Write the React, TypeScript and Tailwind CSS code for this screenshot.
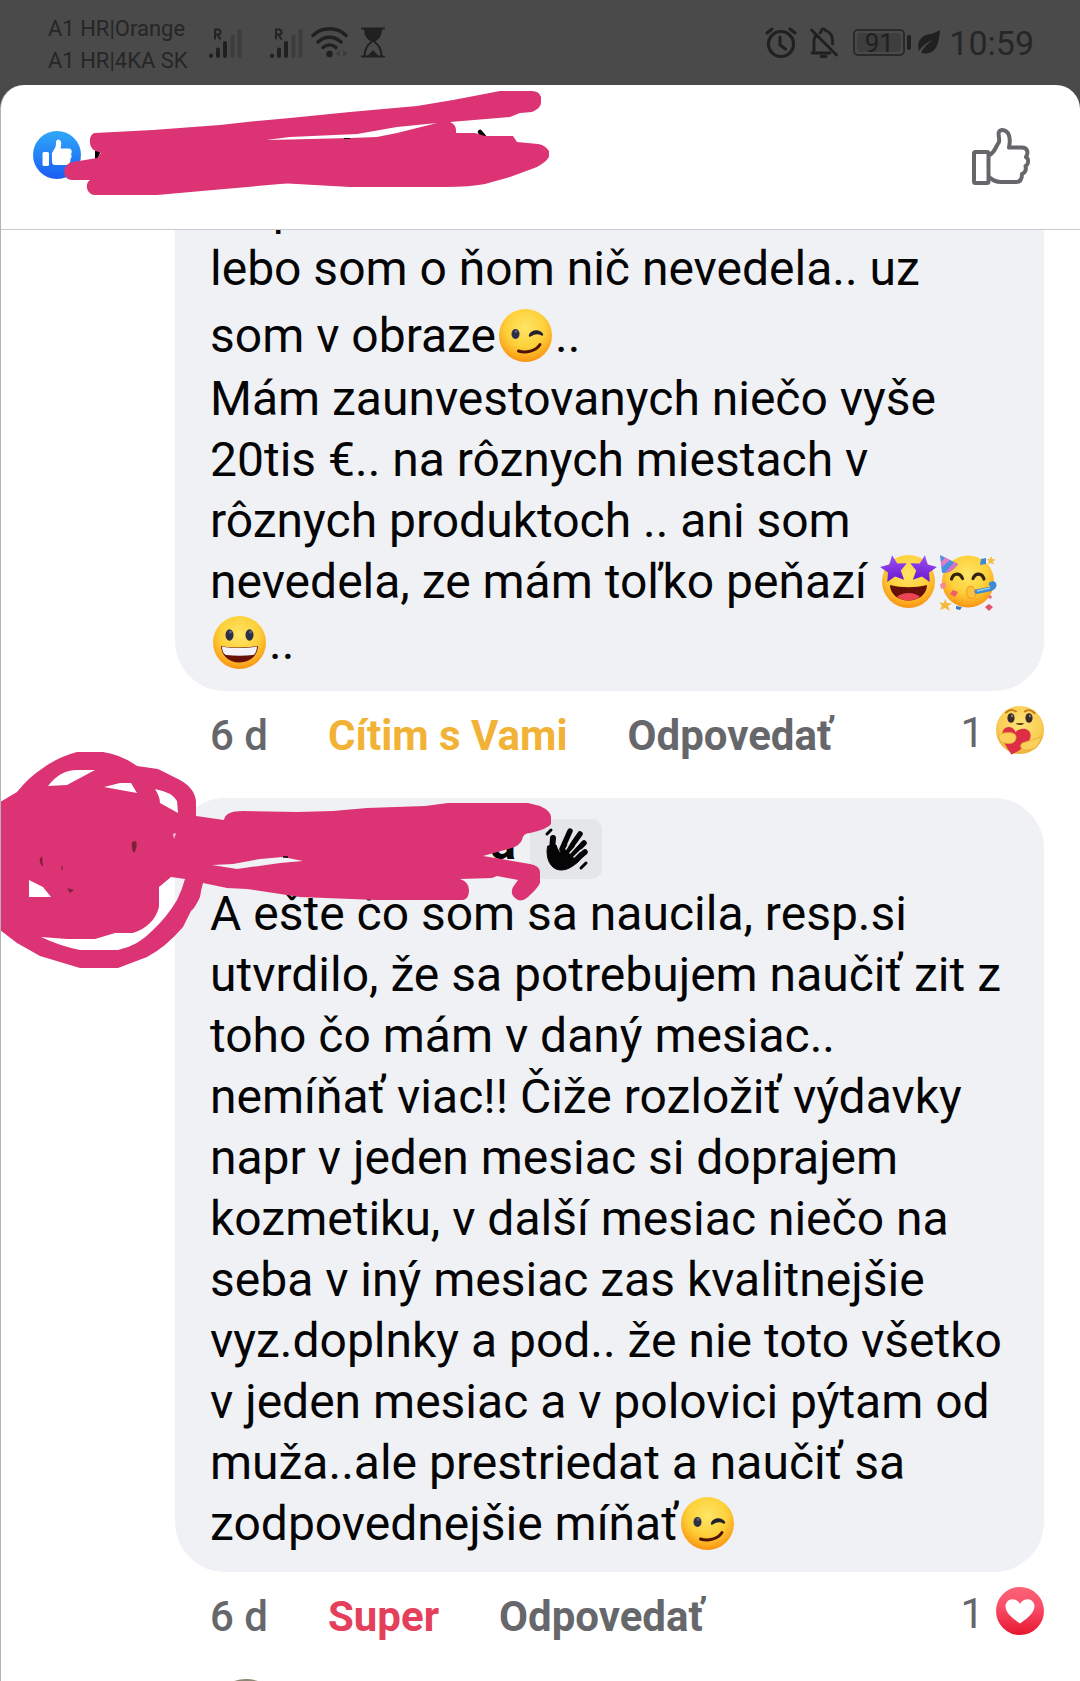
import React from "react";

const FONT = "font-[Roboto,'Noto_Sans',sans-serif]";

function SharedGradients() {
  return (
    <svg className="absolute h-0 w-0" aria-hidden="true">
      <defs>
        <radialGradient id="face" cx="0.5" cy="0.35" r="0.68">
          <stop offset="0" stopColor="#ffe566" />
          <stop offset="0.55" stopColor="#fdd03a" />
          <stop offset="0.85" stopColor="#fba51c" />
          <stop offset="1" stopColor="#f6890f" />
        </radialGradient>
        <radialGradient id="softFace" cx="0.5" cy="0.4" r="0.6">
          <stop offset="0" stopColor="#fde377" />
          <stop offset="0.7" stopColor="#fbcf55" />
          <stop offset="1" stopColor="#eeb03c" />
        </radialGradient>
        <linearGradient id="like" x1="0" y1="0" x2="0" y2="1">
          <stop offset="0" stopColor="#2fa8fb" />
          <stop offset="1" stopColor="#1a5df2" />
        </linearGradient>
        <linearGradient id="love" x1="0" y1="0" x2="0" y2="1">
          <stop offset="0" stopColor="#fc6275" />
          <stop offset="0.4" stopColor="#f9506a" />
          <stop offset="1" stopColor="#e8152f" />
        </linearGradient>
        <linearGradient id="star" x1="0" y1="0" x2="0" y2="1">
          <stop offset="0" stopColor="#9b50f5" />
          <stop offset="1" stopColor="#6a1ad0" />
        </linearGradient>
      </defs>
    </svg>
  );
}

function Emoji({ label, children }: { label: string; children: React.ReactNode }) {
  return (
    <svg
      role="img"
      aria-label={label}
      viewBox="0 0 53 53"
      className="mx-[3px] inline-block h-[53px] w-[53px] overflow-visible align-[-10px]"
    >
      {children}
    </svg>
  );
}

function Wink() {
  return (
    <Emoji label="žmurkajúca tvár">
      <circle cx="26.5" cy="26.5" r="26.5" fill="url(#face)" />
      <ellipse cx="16.5" cy="25" rx="4" ry="5" fill="#2b2f49" />
      <circle cx="17" cy="22.5" r="1.4" fill="#5c6285" />
      <path d="M31 26.500C33 21.500 40 21 43 25.500C39.500 23.500 35 24 31 26.500Z" fill="#22202e" stroke="#22202e" strokeWidth="2.400" strokeLinejoin="round" />
      <path d="M19.500 42C27 44.500 37 42 41 35.500" fill="none" stroke="#4f1206" strokeWidth="3" strokeLinecap="round" />
    </Emoji>
  );
}

function Grin() {
  return (
    <Emoji label="usmiata tvár">
      <circle cx="26.5" cy="26.5" r="26.5" fill="url(#face)" />
      <ellipse cx="16.500" cy="19" rx="4" ry="5.800" fill="#2b2f49" />
      <ellipse cx="36.500" cy="19" rx="4" ry="5.800" fill="#2b2f49" />
      <circle cx="17.500" cy="16" r="1.500" fill="#5c6285" />
      <circle cx="37.500" cy="16" r="1.500" fill="#5c6285" />
      <path d="M8 30C20 32 33 32 45 30C45 39 37 46.500 26.500 46.500C16 46.500 8 39 8 30Z" fill="#671109" />
      <path d="M9 30.600C20 32.600 33 32.600 44 30.600C44 35 42 38.500 40 39C31 40 22 40 13 39C11 38.500 9 35 9 30.600Z" fill="#f4f2fa" />
    </Emoji>
  );
}

function StarEyes() {
  const star = "M0 -14L4 -5L13.500 -4L6.500 2.500L8.500 12L0 7.500L-8.500 12L-6.500 2.500L-13.500 -4L-4 -5Z";
  return (
    <Emoji label="tvár s hviezdami v očiach">
      <circle cx="26.5" cy="26.5" r="26.5" fill="url(#face)" />
      <path d="M8 30C20 33 33 33 45 30C45 39 37 45.500 26.500 45.500C16 45.500 8 39 8 30Z" fill="#651008" />
      <path d="M15 42C20 36.500 33 36.500 38 42C31 46.500 22 46.500 15 42Z" fill="#ec4453" />
      <path d={star} transform="translate(12 14) rotate(-8)" fill="url(#star)" />
      <path d={star} transform="translate(41 14) rotate(8)" fill="url(#star)" />
    </Emoji>
  );
}

function Party() {
  return (
    <Emoji label="oslavujúca tvár">
      <circle cx="27" cy="26.500" r="26" fill="url(#face)" />
      <path d="M-1 0L17 9C14 14 8 18 1 18Z" fill="#4b8fe0" />
      <path d="M4 2.500L9 5L1 12L0 7Z" fill="#e77bc3" />
      <path d="M13 7L17 9C14 14 8 18 4 18Z" fill="#d873bd" />
      <path d="M10.500 24C12.500 17.500 19 17.500 21.500 23.500M32 23.500C34.500 17.500 41 17.500 43 24" fill="none" stroke="#33230f" strokeWidth="3.200" strokeLinecap="round" />
      <path d="M34 37L49 34C55 32 54 27 50 29" fill="none" stroke="#3c8bd4" strokeWidth="4.500" strokeLinecap="round" />
      <path d="M36 36L49 33" stroke="#8fd0f2" strokeWidth="1.500" />
      <path d="M27 32C31 30 35 33 33 37C37 40 32 45 28 43C25 41 25 35 27 32Z" fill="#fbc23a" stroke="#ee9b24" strokeWidth="1" />
      <path d="M40 4L45 3L45 9L39 10Z" fill="#3f8ad8" />
      <path d="M50 1L51.500 4L54.500 4.500L52 6.500L53 9.500L50 8L47 9.500L48 6.500L46 4L49 4Z" fill="#f3bf3f" />
      <path d="M-1 29L4 27L5 32L0 34Z" fill="#f08a9c" />
      <path d="M12 35L17 37L14 42L9 39Z" fill="#ef5d6b" />
      <path d="M4 44L6 48L11 48.500L7 51L9 56L4 53L-1 55L1 50.500L-2 47.500L3 48Z" fill="#f2b93a" />
      <path d="M15 51L21 52L19 55L15 54Z" fill="#3f78c0" />
      <path d="M48 49L52 52L48 56L44 52Z" fill="#e3526a" />
      <path d="M48 40L51 41L50 44L47 43Z" fill="#ee6c80" />
    </Emoji>
  );
}

function CareReaction() {
  return (
    <svg viewBox="0 0 48 48" className="h-12 w-12 overflow-visible" role="img" aria-label="Cítim s Vami">
      <circle cx="24" cy="24" r="24" fill="url(#softFace)" />
      <path d="M10 6.500C13 3.500 17 3.500 20 5.500M29 5.500C32 3.500 36 4 38.500 7" fill="none" stroke="#c77a1b" strokeWidth="2" strokeLinecap="round" />
      <ellipse cx="15" cy="12" rx="3.600" ry="4.800" fill="#3a2a2a" />
      <ellipse cx="33" cy="12" rx="3.600" ry="4.800" fill="#3a2a2a" />
      <circle cx="16" cy="10" r="1.200" fill="#8a7a78" />
      <circle cx="34" cy="10" r="1.200" fill="#8a7a78" />
      <path d="M19.500 17.500Q24 16.500 28.500 17.500Q24 20.500 19.500 17.500Z" fill="#5a2d12" />
      <path d="M15.500 48.500C11 42 5 33 6.500 26C8 19.500 17 19 19.500 26C24 21 33 21.500 34.500 28C36 37 24 45 15.500 48.500Z" fill="#dc2f45" />
      <path d="M3 29C8 26 15 26 18.500 28C21.500 30 20 36 16 37C11 38.500 6 36.500 3 34Z" fill="#fbd05a" stroke="#e9a93a" strokeWidth="0.800" />
      <path d="M46 31C41 32 33 35 26.500 37C23 39 25 44 29 44C34 44.500 38 43 41 41Z" fill="#fbd05a" stroke="#e9a93a" strokeWidth="0.800" />
    </svg>
  );
}

function LoveReaction() {
  return (
    <svg viewBox="0 0 48 48" className="h-12 w-12" role="img" aria-label="Super">
      <circle cx="24" cy="24" r="24" fill="url(#love)" />
      <path d="M24 36.500C19 33 9.500 26.500 9.500 19.500C9.500 11.500 20 9.500 24 17C28 9.500 38.500 11.500 38.500 19.500C38.500 26.500 29 33 24 36.500Z" fill="#fff" />
    </svg>
  );
}

function Signal() {
  return (
    <svg viewBox="0 0 33 32" className="h-8 w-[33px]" aria-hidden="true">
      <path d="M6 12.500V2.500H9Q11.500 2.500 11.500 5T9 7.500H6M8.500 7.500L11.500 12.500" fill="none" stroke="#232323" strokeWidth="2" />
      <g strokeWidth="4" strokeLinecap="round">
        <path d="M2 29V28.500M9 29V22.500M16 29V16" stroke="#202020" />
        <path d="M23.500 29V9.500M30.500 29V4" stroke="#3c3c3c" />
      </g>
    </svg>
  );
}

function StatusBar() {
  return (
    <header className="flex h-[85px] shrink-0 items-center justify-between pr-[46px] pl-12 text-[#262626]">
      <div className="flex items-center">
        <div className="w-[161px] pt-1 text-[22px] leading-8 whitespace-nowrap">
          <div>A1 HR|Orange</div>
          <div>A1 HR|4KA SK</div>
        </div>
        <div className="flex items-center">
          <Signal />
          <span className="w-7" />
          <Signal />
          <svg viewBox="0 0 38 31" className="ml-2 h-[31px] w-[38px]" fill="none" aria-hidden="true">
            <g stroke="#202020" strokeWidth="3.500" strokeLinecap="round">
              <path d="M2 8.500C11 -0.500 26 -0.500 35 8.500" />
              <path d="M7 15C14 8.500 23 8.500 30 15" />
              <path d="M12 20.500C16 17 21 17 25 20.500" />
            </g>
            <circle cx="18.500" cy="27" r="3.200" fill="#202020" />
            <path d="M29 23V30L25 26.500ZM32 23V30L37 26.500Z" fill="#3c3c3c" />
          </svg>
          <svg viewBox="0 0 24 31" className="ml-3 h-[31px] w-6" fill="none" aria-hidden="true">
            <path d="M1 1.500H23M1 29.500H23" stroke="#202020" strokeWidth="2" strokeLinecap="round" />
            <path d="M3 2H21C21 9 18 12 13.500 15H10.500C6 12 3 9 3 2Z" fill="#202020" />
            <path d="M11 14.500C6.500 18 4 21 3.500 29M13 14.500C17.500 18 20 21 20.500 29" stroke="#202020" strokeWidth="2" />
            <path d="M6.500 29L12 23L17.500 29Z" fill="#202020" />
          </svg>
        </div>
      </div>
      <div className="flex items-center">
        <svg viewBox="0 0 32 32" className="h-8 w-8" fill="none" stroke="#202020" aria-hidden="true">
          <circle cx="16" cy="17" r="12.500" strokeWidth="3.200" />
          <path d="M15 10V18L20.500 22M2 6L7 2M25 2L30 6" strokeWidth="3" strokeLinecap="round" />
        </svg>
        <svg viewBox="0 0 30 32" className="ml-3 h-8 w-[30px]" fill="none" stroke="#202020" strokeWidth="2.800" strokeLinecap="round" aria-hidden="true">
          <path d="M2.500 3L27.500 28M3 26H21M5 25V14C5 12 5.500 10.500 6.500 9M11 6C12 5 12.500 5 12.500 3C13 1.500 16 1.500 16.500 3.500C21 5 23.500 9 23.500 14V17" />
          <path d="M12 29.500H17" />
        </svg>
        <div className="ml-3.5 flex items-center">
          <div className="flex h-[27px] w-[52px] rounded-[5px] border-2 border-[#2a2a2a] p-0.5">
            <div className="flex flex-1 items-center justify-center rounded-sm bg-[#3e3e3e] text-[26px] leading-5 text-[#202020]">91</div>
          </div>
          <span className="ml-0.5 h-[15px] w-1 rounded-sm bg-[#202020]" />
        </div>
        <svg viewBox="0 0 24 26" className="mb-0.5 ml-1.5 h-[26px] w-6" aria-hidden="true">
          <path d="M23 1C22 11 21 23 10 24.500C7 25 5 24 4 23.500C7 18 11 14 16 11C10 13 5 17 2 22C-1 12 5 7 11 5.500C16 4.500 19 3.500 23 1Z" fill="#202020" />
        </svg>
        <time className="ml-2 text-[34px] leading-10">10:59</time>
      </div>
    </header>
  );
}

function HeaderScribble() {
  return (
    <svg viewBox="60 85 500 115" className="pointer-events-none absolute top-0 left-[59px] h-[115px] w-[500px]" aria-hidden="true">
      <path d="M95 151H101L97 160H95Z" fill="#000" />
      <path d="M480 132L485 138" stroke="#000" strokeWidth="4.500" strokeLinecap="round" />
      <path
        fill="#db3374"
        d="M95 133C88 134 88 149 96 151L101 153L97 158L73 162C61 164 62 180 72 180H90C84 184 87 195 95 195H157L213 190L280 184Q287 183 297 184L350 187H445Q470 187 485 184L510 177L537 167Q549 160 549 156V151Q545 145 538 144L517 142L513 136H485L475 133H456Q457 125 450 122L510 117L520 113L532 112Q541 108 541 103V97Q539 91 532 91H500L453 100L417 106L350 112L290 118L257 121L220 125L153 130Z"
      />
      <path d="M266 140L290 137L357 134L397 127L437 123L397 133L377 137L350 138L290 139.500Z" fill="#fff" />
      <path d="M344 138.500H350" stroke="#000" strokeWidth="1" />
    </svg>
  );
}

function AvatarScribble() {
  return (
    <svg viewBox="0 750 560 220" className="pointer-events-none absolute -top-12 left-[-1px] h-[220px] w-[560px]" aria-hidden="true">
      <path
        fill="#db3374"
        fillRule="evenodd"
        d="M0 802L17 792Q29 777 43 768Q58 757 77 752H103Q122 755 137 766L158 769L180 780Q196 789 196 803V816L224 820Q225 811 243 811L297 812L333 811L367 808L425 806L448 803H528L540 806Q551 811 551 817V824Q548 829 530 833Q523 833 522 840Q520 845 512 848L483 856L530 864Q540 866 540 872V883Q537 889 530 895Q524 902 518 900Q509 895 513 887L518 880L497 876L492 878L460 879Q469 882 469 890Q469 899 463 900H377L300 897L247 889L227 888L203 883Q201 890 200 897Q195 908 191 911L183 927Q166 947 147 957L118 968H80L40 956L17 943L0 930Z
        M48 786Q60 770 77 770H95L67 785Z
        M104 787L120 783H131L137 793Z
        M155 789Q172 792 177 801L178 813L160 803Q160 797 155 789Z
        M29 880L43 887L51 897H29Z
        M171 877L185 879Q182 890 177 900Q167 917 153 930Q138 946 118 950H80Q60 946 41 937L67 939H95L115 933H133Q154 926 159 907V887Z
        M212 865L233 864L260 859L283 857L303 861L280 863L237 869Z"
      />
      <path d="M42 856Q37 861 43 867ZM132 842L136 841Q138 847 134 853Q131 849 132 842ZM67 888L74 890L70 893ZM61 865L63 868L62 871Z" fill="#7f2038" />
      <path d="M173 834L176 833L174 839Z" fill="#f6c9da" />
      <path d="M283 857H288" stroke="#000" strokeWidth="1.500" />
    </svg>
  );
}

function Actions({ reaction, tone, icon }: { reaction: string; tone: string; icon: React.ReactNode }) {
  return (
    <div className="flex items-start pt-[15px] pr-9 pl-[209px] text-[42px] leading-12 text-[#66676b]">
      <div className="flex gap-[60px] pt-1.5 whitespace-nowrap">
        <span className="font-medium">6 d</span>
        <button type="button" className={`font-bold ${tone}`}>{reaction}</button>
        <button type="button" className="font-bold">Odpovedať</button>
      </div>
      <button type="button" className="ml-auto flex gap-3">
        <span className="pt-[3px]">1</span>
        {icon}
      </button>
    </div>
  );
}

const secondComment = [
  "A ešte čo som sa naucila, resp.si",
  "utvrdilo, že sa potrebujem naučiť zit z",
  "toho čo mám v daný mesiac..",
  "nemíňať viac!! Čiže rozložiť výdavky",
  "napr v jeden mesiac si doprajem",
  "kozmetiku, v další mesiac niečo na",
  "seba v iný mesiac zas kvalitnejšie",
  "vyz.doplnky a pod.. že nie toto všetko",
  "v jeden mesiac a v polovici pýtam od",
  "muža..ale prestriedat a naučiť sa",
];

export default function App() {
  return (
    <div className={`flex h-screen flex-col overflow-hidden bg-[#4a4a4a] ${FONT}`}>
      <SharedGradients />
      <StatusBar />
      <main className="flex min-h-0 flex-1 flex-col overflow-hidden rounded-t-[24px] border-l border-[#b4b4b4] bg-white">
        <div className="relative flex h-[145px] shrink-0 items-center justify-between border-b border-[#c9cacd] pr-[50px] pl-8">
          <svg viewBox="0 0 48 48" className="mb-1 h-12 w-12" role="img" aria-label="Páči sa mi to">
            <circle cx="24" cy="24" r="24" fill="url(#like)" />
            <rect x="9.500" y="21" width="6.500" height="14" rx="1.500" fill="#fff" />
            <path d="M19 22L22.500 16C23.500 13 22 8.500 25.500 8.500C29 9 28.500 14 27.500 17.500H36C39 18 39.500 21 38 23C39 25 38.500 27 37.500 28C37.500 32 36 34 33 34H23C20 34 19 33 19 30Z" fill="#fff" />
          </svg>
          <button type="button" aria-label="Páči sa mi to">
            <svg viewBox="0 0 58 58" className="h-[58px] w-[58px]" fill="none" stroke="#66676b" strokeWidth="4" strokeLinejoin="round">
              <rect x="2" y="24" width="14.500" height="31" rx="1.500" />
              <path d="M17 27C22 26 23 20 27 14C28 9 24 3 30 2C37 2 39 10 37 19.500H50C55 19.500 57 24 54 29C57 31 57 36 53.500 38C54.500 42 53 45 50 46C50 51 48 54 44 54H29C23 54 21 52 17 49" />
            </svg>
          </button>
          <HeaderScribble />
        </div>

        <div className="min-h-0 flex-1 overflow-hidden">
          <article>
            <div className="mt-[-53px] mr-9 ml-[174px] rounded-b-[50px] bg-[#f0f1f5] pr-4 pb-[18px] pl-[35px] text-[48px] leading-[61px] whitespace-nowrap text-[#050505]">
              <p>sa p</p>
              <p>lebo som o ňom nič nevedela.. uz</p>
              <p className="pt-1.5 pb-0.5">som v obraze<Wink />..</p>
              <p>Mám zaunvestovanych niečo vyše</p>
              <p>20tis €.. na rôznych miestach v</p>
              <p>rôznych produktoch .. ani som</p>
              <p>nevedela, ze mám toľko peňazí <StarEyes /><Party /></p>
              <p><Grin />..</p>
            </div>
            <Actions reaction="Cítim s Vami" tone="text-[#f2b236]" icon={<CareReaction />} />
          </article>

          <article className="relative mt-[38px]">
            <div className="mr-9 ml-[174px] rounded-[50px] bg-[#f0f1f5] pt-[21px] pr-4 pb-[18px] pl-[35px] text-[48px] leading-[61px] whitespace-nowrap text-[#050505]">
              <div className="mb-1 flex h-[60px] gap-3.5">
                <span className="w-[306px] text-right leading-[48px] font-bold">a</span>
                <span className="h-[60px] w-[72px] rounded-[10px] bg-[#e4e6ea]">
                  <svg viewBox="0 0 72 60" className="h-[60px] w-[72px]" fill="none" stroke="#050505" strokeLinecap="round" role="img" aria-label="mávajúca ruka">
                    <path d="M32 30L40 12M37 33L50 15M42 36L54 24M44 42L55 33" strokeWidth="5.500" />
                    <path d="M23 19L22 32" strokeWidth="6" />
                    <path d="M17 32C17 44 23 51 31 51C38 51 43 47 48 43L55 35L48 33L44 27L34 26L30 34Q27 30 26 26L18 27Z" fill="#050505" />
                    <path d="M17 15L21 11M51 49L56 44" strokeWidth="3" />
                    <path d="M36 30L43 18M40 34L49 24M44 38L51 31" stroke="#e4e6ea" strokeWidth="1.500" />
                  </svg>
                </span>
              </div>
              {secondComment.map((line) => (
                <p key={line}>{line}</p>
              ))}
              <p>zodpovednejšie míňať<Wink /></p>
            </div>
            <AvatarScribble />
            <Actions reaction="Super" tone="text-[#e5405b]" icon={<LoveReaction />} />
          </article>

          <article className="mt-[38px] pl-[209px]">
            <div className="h-[72px] w-[72px] rounded-full bg-[#8f8776]" />
          </article>
        </div>
      </main>
    </div>
  );
}
